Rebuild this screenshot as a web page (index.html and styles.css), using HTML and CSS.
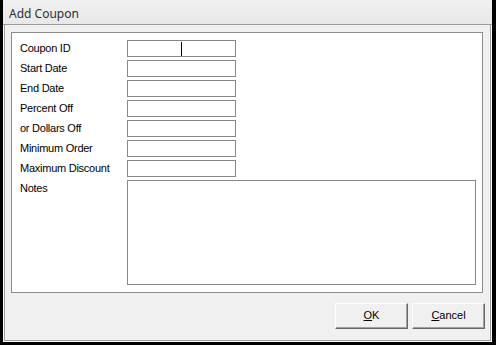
FILE: index.html
```html
<!DOCTYPE html>
<html>
<head>
<meta charset="utf-8">
<link rel="stylesheet" href="styles.css">
</head>
<body>
<div class="frame">
  <div class="window">
    <div class="titlebar">Add Coupon</div>
    <div class="content">
      <div class="panel">
        <div class="label">Coupon ID</div>
        <div class="field"><span class="caret"></span></div>
        <div class="label">Start Date</div>
        <div class="field"></div>
        <div class="label">End Date</div>
        <div class="field"></div>
        <div class="label">Percent Off</div>
        <div class="field"></div>
        <div class="label">or Dollars Off</div>
        <div class="field"></div>
        <div class="label">Minimum Order</div>
        <div class="field"></div>
        <div class="label">Maximum Discount</div>
        <div class="field"></div>
        <div class="label">Notes</div>
        <div class="notes"></div>
      </div>
      <div class="buttons">
        <div class="btn"><u>O</u>K</div>
        <div class="btn"><u>C</u>ancel</div>
      </div>
    </div>
  </div>
</div>
</body>
</html>
```

FILE: styles.css
```css
html, body {
  margin: 0;
  padding: 0;
  background: #f0f0f0;
}
.frame {
  width: 496px;
  height: 345px;
  box-sizing: border-box;
  border-left: 3px solid #000;
  border-right: 4px solid #000;
  border-bottom: 3px solid #000;
  background: #f0f0f0;
}
.window {
  height: 100%;
  box-sizing: border-box;
  display: flex;
  flex-direction: column;
  background: #f0f0f0;
  box-shadow: inset 1px 0 #fff, inset -1px 0 #fff, inset 0 -1px #fff,
              inset 2px 0 #a0a0a0, inset -2px 0 #a0a0a0, inset 0 -2px #a0a0a0;
}
.titlebar {
  height: 25px;
  border-bottom: 1px solid #9a9a9a;
  background: linear-gradient(#f0f0f0, #e8e8e8);
  font-family: "Noto Sans", "Open Sans", sans-serif;
  font-size: 12px;
  line-height: 25px;
  color: #2e2e2e;
  padding-left: 6px;
  padding-top: 1px;
  box-sizing: border-box;
}
.content {
  flex: 1;
  padding: 7px 9px 0 8px;
  display: flex;
  flex-direction: column;
}
.panel {
  border: 1px solid #8c8c8c;
  background: #fff;
  padding: 7px 6px 7px 8px;
  display: grid;
  grid-template-columns: 107px 1fr;
  row-gap: 3px;
  grid-template-rows: repeat(7, 17px) 105px;
}
.label {
  font-family: "Liberation Sans", Arial, sans-serif;
  font-size: 11px;
  line-height: 13px;
  padding-top: 2px;
  color: #000;
  letter-spacing: -0.25px;
}
.field {
  width: 109px;
  height: 17px;
  box-sizing: border-box;
  border: 1px solid #868686;
  background: #fff;
  position: relative;
}
.caret {
  position: absolute;
  left: 53px;
  top: 1px;
  width: 1px;
  height: 14px;
  background: #000;
}
.notes {
  box-sizing: border-box;
  border: 1px solid #868686;
  background: #fff;
}
.buttons {
  display: flex;
  justify-content: flex-end;
  gap: 4px;
  margin-top: 10px;
  margin-right: -2px;
}
.btn {
  width: 73px;
  height: 26px;
  box-sizing: border-box;
  border: 1px solid;
  border-color: #fff #696969 #696969 #fff;
  box-shadow: inset -1px -1px #a0a0a0;
  background: #f0f0f0;
  font-family: "Liberation Sans", Arial, sans-serif;
  font-size: 11px;
  line-height: 23px;
  text-align: center;
  color: #000;
}
```
